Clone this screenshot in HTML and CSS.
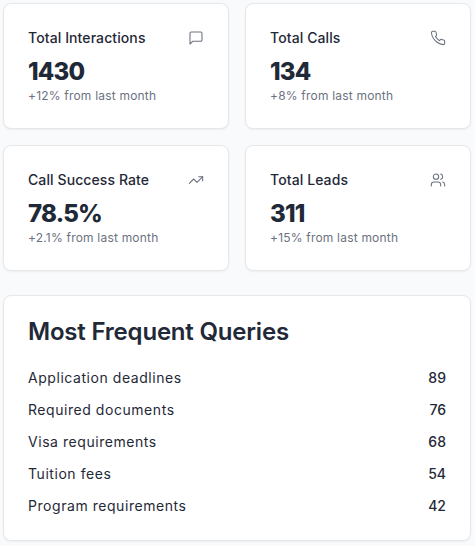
FILE: index.html
```html
<!DOCTYPE html>
<html lang="en">
<head>
<meta charset="utf-8">
<title>Dashboard</title>
<link rel="stylesheet" href="styles.css">
</head>
<body>
<main class="page">
  <section class="stats">
    <article class="card stat">
      <header class="stat-head">
        <h3 class="stat-title">Total Interactions</h3>
        <svg class="icon" viewBox="0 0 24 24"><path d="M21 15a2 2 0 0 1-2 2H7l-4 4V5a2 2 0 0 1 2-2h14a2 2 0 0 1 2 2z"/></svg>
      </header>
      <div class="stat-value">1430</div>
      <p class="stat-note">+12% from last month</p>
    </article>
    <article class="card stat">
      <header class="stat-head">
        <h3 class="stat-title">Total Calls</h3>
        <svg class="icon" viewBox="0 0 24 24"><path d="M22 16.92v3a2 2 0 0 1-2.18 2 19.79 19.79 0 0 1-8.63-3.07 19.5 19.5 0 0 1-6-6 19.79 19.79 0 0 1-3.07-8.67A2 2 0 0 1 4.11 2h3a2 2 0 0 1 2 1.72 12.84 12.84 0 0 0 .7 2.81 2 2 0 0 1-.45 2.11L8.09 9.91a16 16 0 0 0 6 6l1.27-1.27a2 2 0 0 1 2.11-.45 12.84 12.84 0 0 0 2.81.7A2 2 0 0 1 22 16.92z"/></svg>
      </header>
      <div class="stat-value">134</div>
      <p class="stat-note">+8% from last month</p>
    </article>
    <article class="card stat">
      <header class="stat-head">
        <h3 class="stat-title">Call Success Rate</h3>
        <svg class="icon" viewBox="0 0 24 24"><path d="M22 7l-8.5 8.5-5-5L2 17"/><path d="M16 7h6v6"/></svg>
      </header>
      <div class="stat-value">78.5%</div>
      <p class="stat-note">+2.1% from last month</p>
    </article>
    <article class="card stat">
      <header class="stat-head">
        <h3 class="stat-title">Total Leads</h3>
        <svg class="icon" viewBox="0 0 24 24"><path d="M16 21v-2a4 4 0 0 0-4-4H6a4 4 0 0 0-4 4v2"/><circle cx="9" cy="7" r="4"/><path d="M22 21v-2a4 4 0 0 0-3-3.87"/><path d="M16 3.13a4 4 0 0 1 0 7.75"/></svg>
      </header>
      <div class="stat-value">311</div>
      <p class="stat-note">+15% from last month</p>
    </article>
  </section>
  <section class="card queries">
    <h2 class="queries-title">Most Frequent Queries</h2>
    <ul class="query-list">
      <li class="query"><span class="query-name">Application deadlines</span><span class="query-count">89</span></li>
      <li class="query"><span class="query-name">Required documents</span><span class="query-count">76</span></li>
      <li class="query"><span class="query-name">Visa requirements</span><span class="query-count">68</span></li>
      <li class="query"><span class="query-name">Tuition fees</span><span class="query-count">54</span></li>
      <li class="query"><span class="query-name">Program requirements</span><span class="query-count">42</span></li>
    </ul>
  </section>
</main>
</body>
</html>
```
FILE: styles.css
```css
* { box-sizing: border-box; }
html, body { margin: 0; padding: 0; }
body {
  background: #f9fafb;
  color: #1f2937;
  font-family: Inter, "Liberation Sans", sans-serif;
}
.page {
  display: flex;
  flex-direction: column;
  gap: 24px;
  padding: 3px 4px 4px 3px;
}
.stats {
  display: grid;
  grid-template-columns: 1fr 1fr;
  gap: 16px;
}
.card {
  background: #fff;
  border: 1px solid #e5e7eb;
  border-radius: 8px;
  box-shadow: 0 1px 2px rgba(0, 0, 0, 0.05);
}
.stat {
  height: 126px;
  padding: 24px;
}
.stat-head {
  display: flex;
  justify-content: space-between;
  align-items: center;
  height: 20px;
}
.stat-title {
  margin: 0;
  font-size: 14px;
  font-weight: 500;
  line-height: 20px;
  letter-spacing: 0.1px;
}
.icon {
  width: 16px;
  height: 16px;
  fill: none;
  stroke: #6b7280;
  stroke-width: 1.6;
  stroke-linecap: round;
  stroke-linejoin: round;
  flex: none;
}
.stat-value {
  margin-top: 8px;
  font-size: 24px;
  font-weight: 800;
  line-height: 32px;
  letter-spacing: -0.8px;
}
.stat-note {
  margin: 0;
  font-size: 12px;
  line-height: 16px;
  letter-spacing: 0.2px;
  color: #6b7280;
}
.queries { padding: 24px; height: 246px; }
.queries-title {
  margin: 0;
  font-size: 24px;
  font-weight: 600;
  line-height: 24px;
  letter-spacing: -0.2px;
}
.query-list {
  list-style: none;
  margin: 24px 0 0;
  padding: 0;
  display: flex;
  flex-direction: column;
  gap: 12px;
}
.query {
  display: flex;
  justify-content: space-between;
  align-items: center;
  font-size: 14px;
  line-height: 20px;
}
.query-name { letter-spacing: 0.55px; }
.query-count { font-weight: 500; }
```
